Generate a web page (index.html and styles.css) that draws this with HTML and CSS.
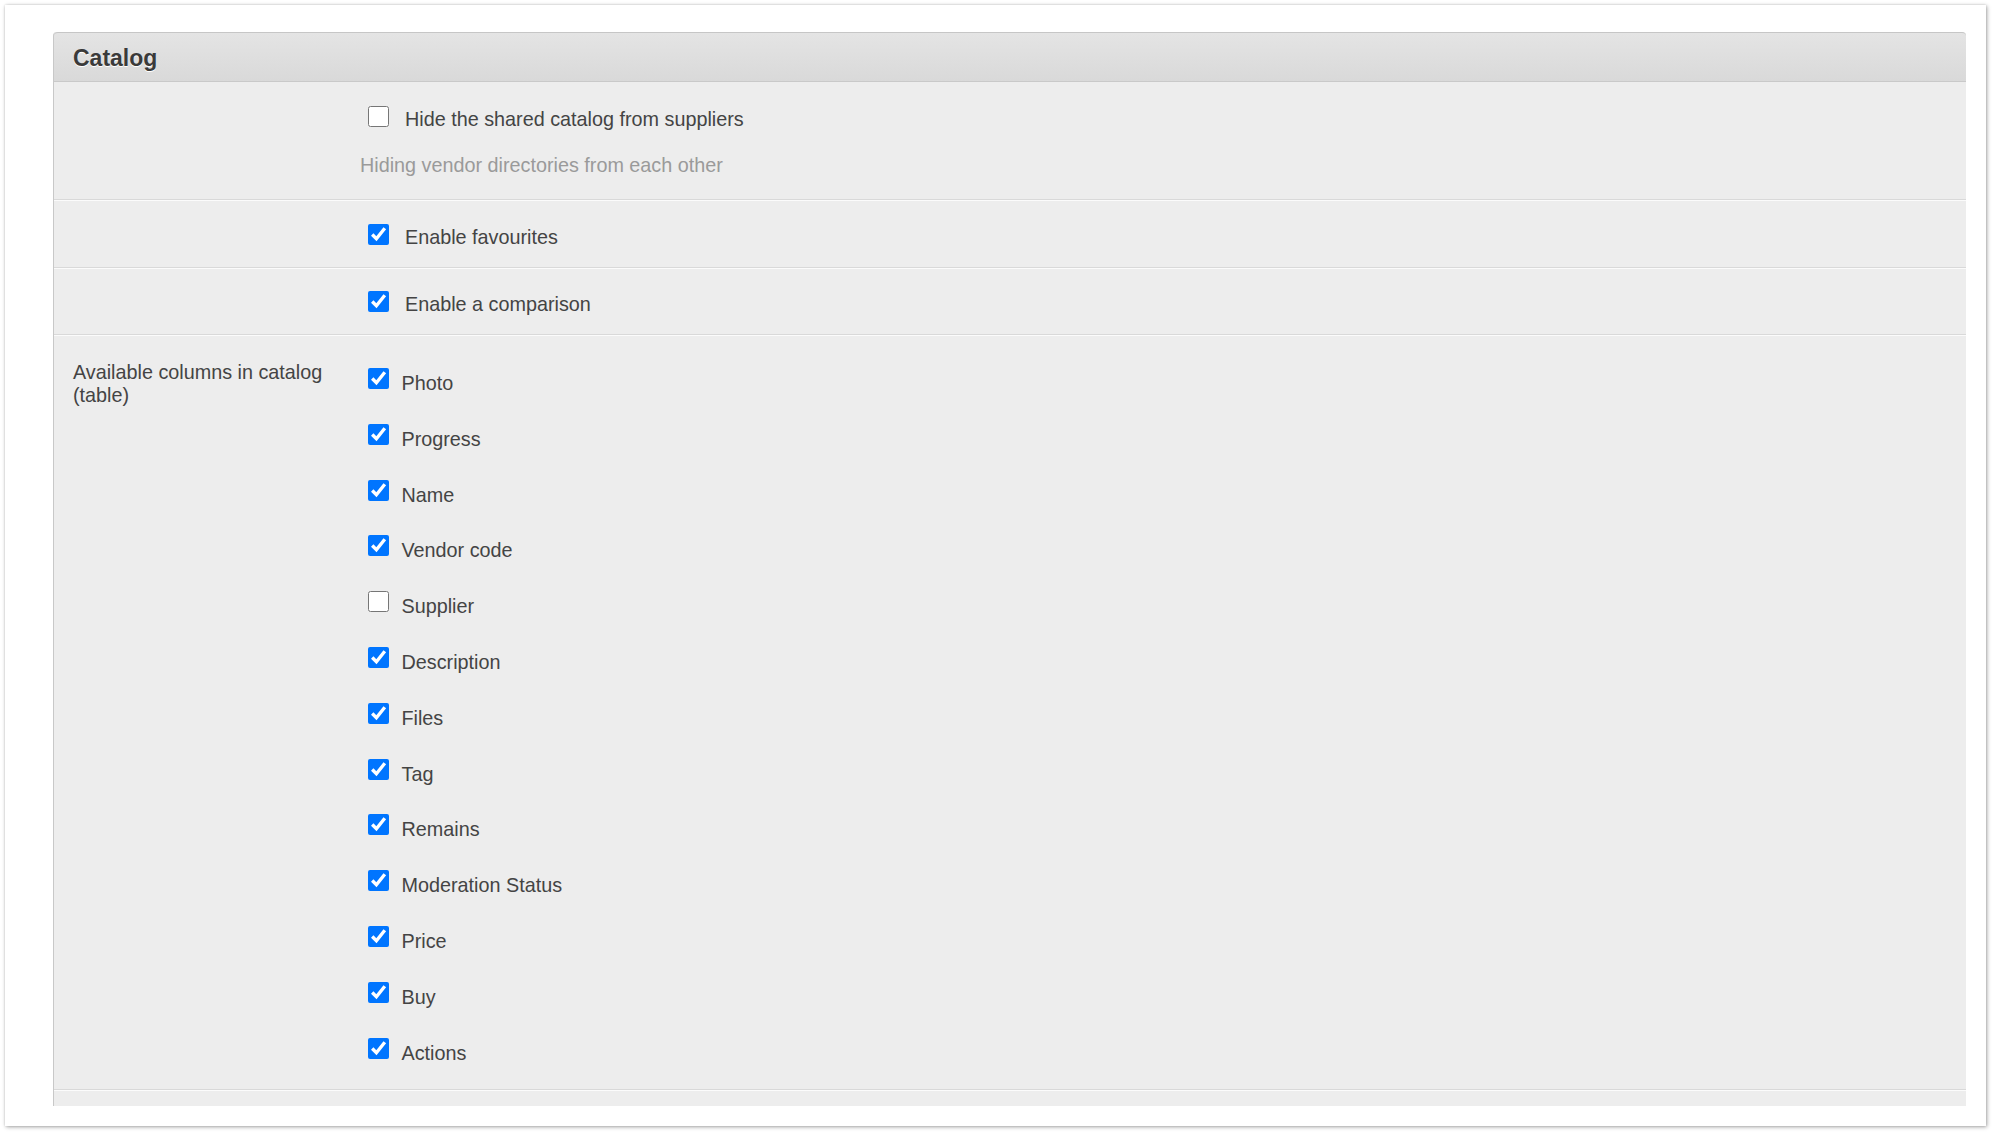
FILE: index.html
```html
<!DOCTYPE html>
<html lang="en">
<head>
<meta charset="utf-8">
<title>Catalog settings</title>
<link rel="stylesheet" href="styles.css">
</head>
<body>
<div class="card">
  <section class="panel">
    <header class="panel-head">Catalog</header>

    <div class="row row-first">
      <div class="label"></div>
      <div class="field field-first">
        <label class="opt"><input type="checkbox"><span>Hide the shared catalog from suppliers</span></label>
        <div class="hint">Hiding vendor directories from each other</div>
      </div>
    </div>

    <div class="row">
      <div class="label"></div>
      <div class="field field-single">
        <label class="opt"><input type="checkbox" checked><span>Enable favourites</span></label>
      </div>
    </div>

    <div class="row">
      <div class="label"></div>
      <div class="field field-single field-tight">
        <label class="opt"><input type="checkbox" checked><span>Enable a comparison</span></label>
      </div>
    </div>

    <div class="row">
      <div class="label label-text">Available columns in catalog (table)</div>
      <div class="field field-list">
        <label class="item"><input type="checkbox" checked><span>Photo</span></label>
        <label class="item"><input type="checkbox" checked><span>Progress</span></label>
        <label class="item"><input type="checkbox" checked><span>Name</span></label>
        <label class="item"><input type="checkbox" checked><span>Vendor code</span></label>
        <label class="item"><input type="checkbox"><span>Supplier</span></label>
        <label class="item"><input type="checkbox" checked><span>Description</span></label>
        <label class="item"><input type="checkbox" checked><span>Files</span></label>
        <label class="item"><input type="checkbox" checked><span>Tag</span></label>
        <label class="item"><input type="checkbox" checked><span>Remains</span></label>
        <label class="item"><input type="checkbox" checked><span>Moderation Status</span></label>
        <label class="item"><input type="checkbox" checked><span>Price</span></label>
        <label class="item"><input type="checkbox" checked><span>Buy</span></label>
        <label class="item"><input type="checkbox" checked><span>Actions</span></label>
      </div>
    </div>

    <div class="panel-foot"></div>
  </section>
</div>
</body>
</html>
```

FILE: styles.css
```css
* {
  box-sizing: border-box;
}

html,
body {
  margin: 0;
  padding: 0;
  background: #ffffff;
}

body {
  padding: 5px 6px 6px 5px;
  font-family: "Liberation Sans", Arial, sans-serif;
  font-size: 19.8px;
  color: #444444;
}

.card {
  height: 1121px;
  background: #ffffff;
  padding: 27px 20px 20px 48px;
  box-shadow: 1px 1px 4px rgba(0, 0, 0, 0.35), 0 0 2px rgba(0, 0, 0, 0.12);
}

.panel {
  background: #ededed;
  border-left: 1px solid #c8c8c8;
  border-radius: 4px 4px 0 0;
}

.panel-head {
  height: 50px;
  padding: 12px 19px 0;
  border-top: 1px solid #c6c6c6;
  border-bottom: 1px solid #c9c9c9;
  border-radius: 4px 4px 0 0;
  background: linear-gradient(#e4e4e4, #d9d9d9);
  font-size: 23px;
  line-height: 26px;
  font-weight: bold;
  color: #3a3a3a;
  text-shadow: 0 1px 0 #ffffff;
}

.row {
  display: grid;
  grid-template-columns: 296px 1fr;
  align-items: start;
  border-top: 1px solid #fbfbfb;
  border-bottom: 1px solid #d9d9d9;
}

.row-first {
  border-top: 0;
}

.label {
  padding-left: 19px;
}

.label-text {
  padding-top: 25px;
  padding-right: 10px;
  line-height: 22.5px;
}

.field {
  padding-left: 10px;
}

.field-first {
  padding-top: 24px;
  padding-bottom: 23px;
}

.field-single {
  padding-top: 23px;
  padding-bottom: 19px;
}

.field-tight {
  padding-top: 22px;
  padding-bottom: 19px;
}

.field-list {
  display: flex;
  flex-direction: column;
  align-items: flex-start;
  gap: 29.8px;
  padding-top: 32px;
  padding-bottom: 25px;
}

.opt,
.item {
  display: flex;
  align-items: flex-start;
  margin-left: 8px;
  line-height: 22px;
}

.opt input,
.item input {
  width: 21px;
  height: 21px;
  margin: 0;
  flex: none;
}

.opt span {
  padding-top: 2px;
  margin-left: 16px;
}

.item span {
  padding-top: 4px;
  margin-left: 12.5px;
}

.hint {
  margin-top: 24px;
  line-height: 22px;
  color: #9a9a9a;
}

.panel-foot {
  height: 16px;
  border-top: 1px solid #fbfbfb;
}
```
